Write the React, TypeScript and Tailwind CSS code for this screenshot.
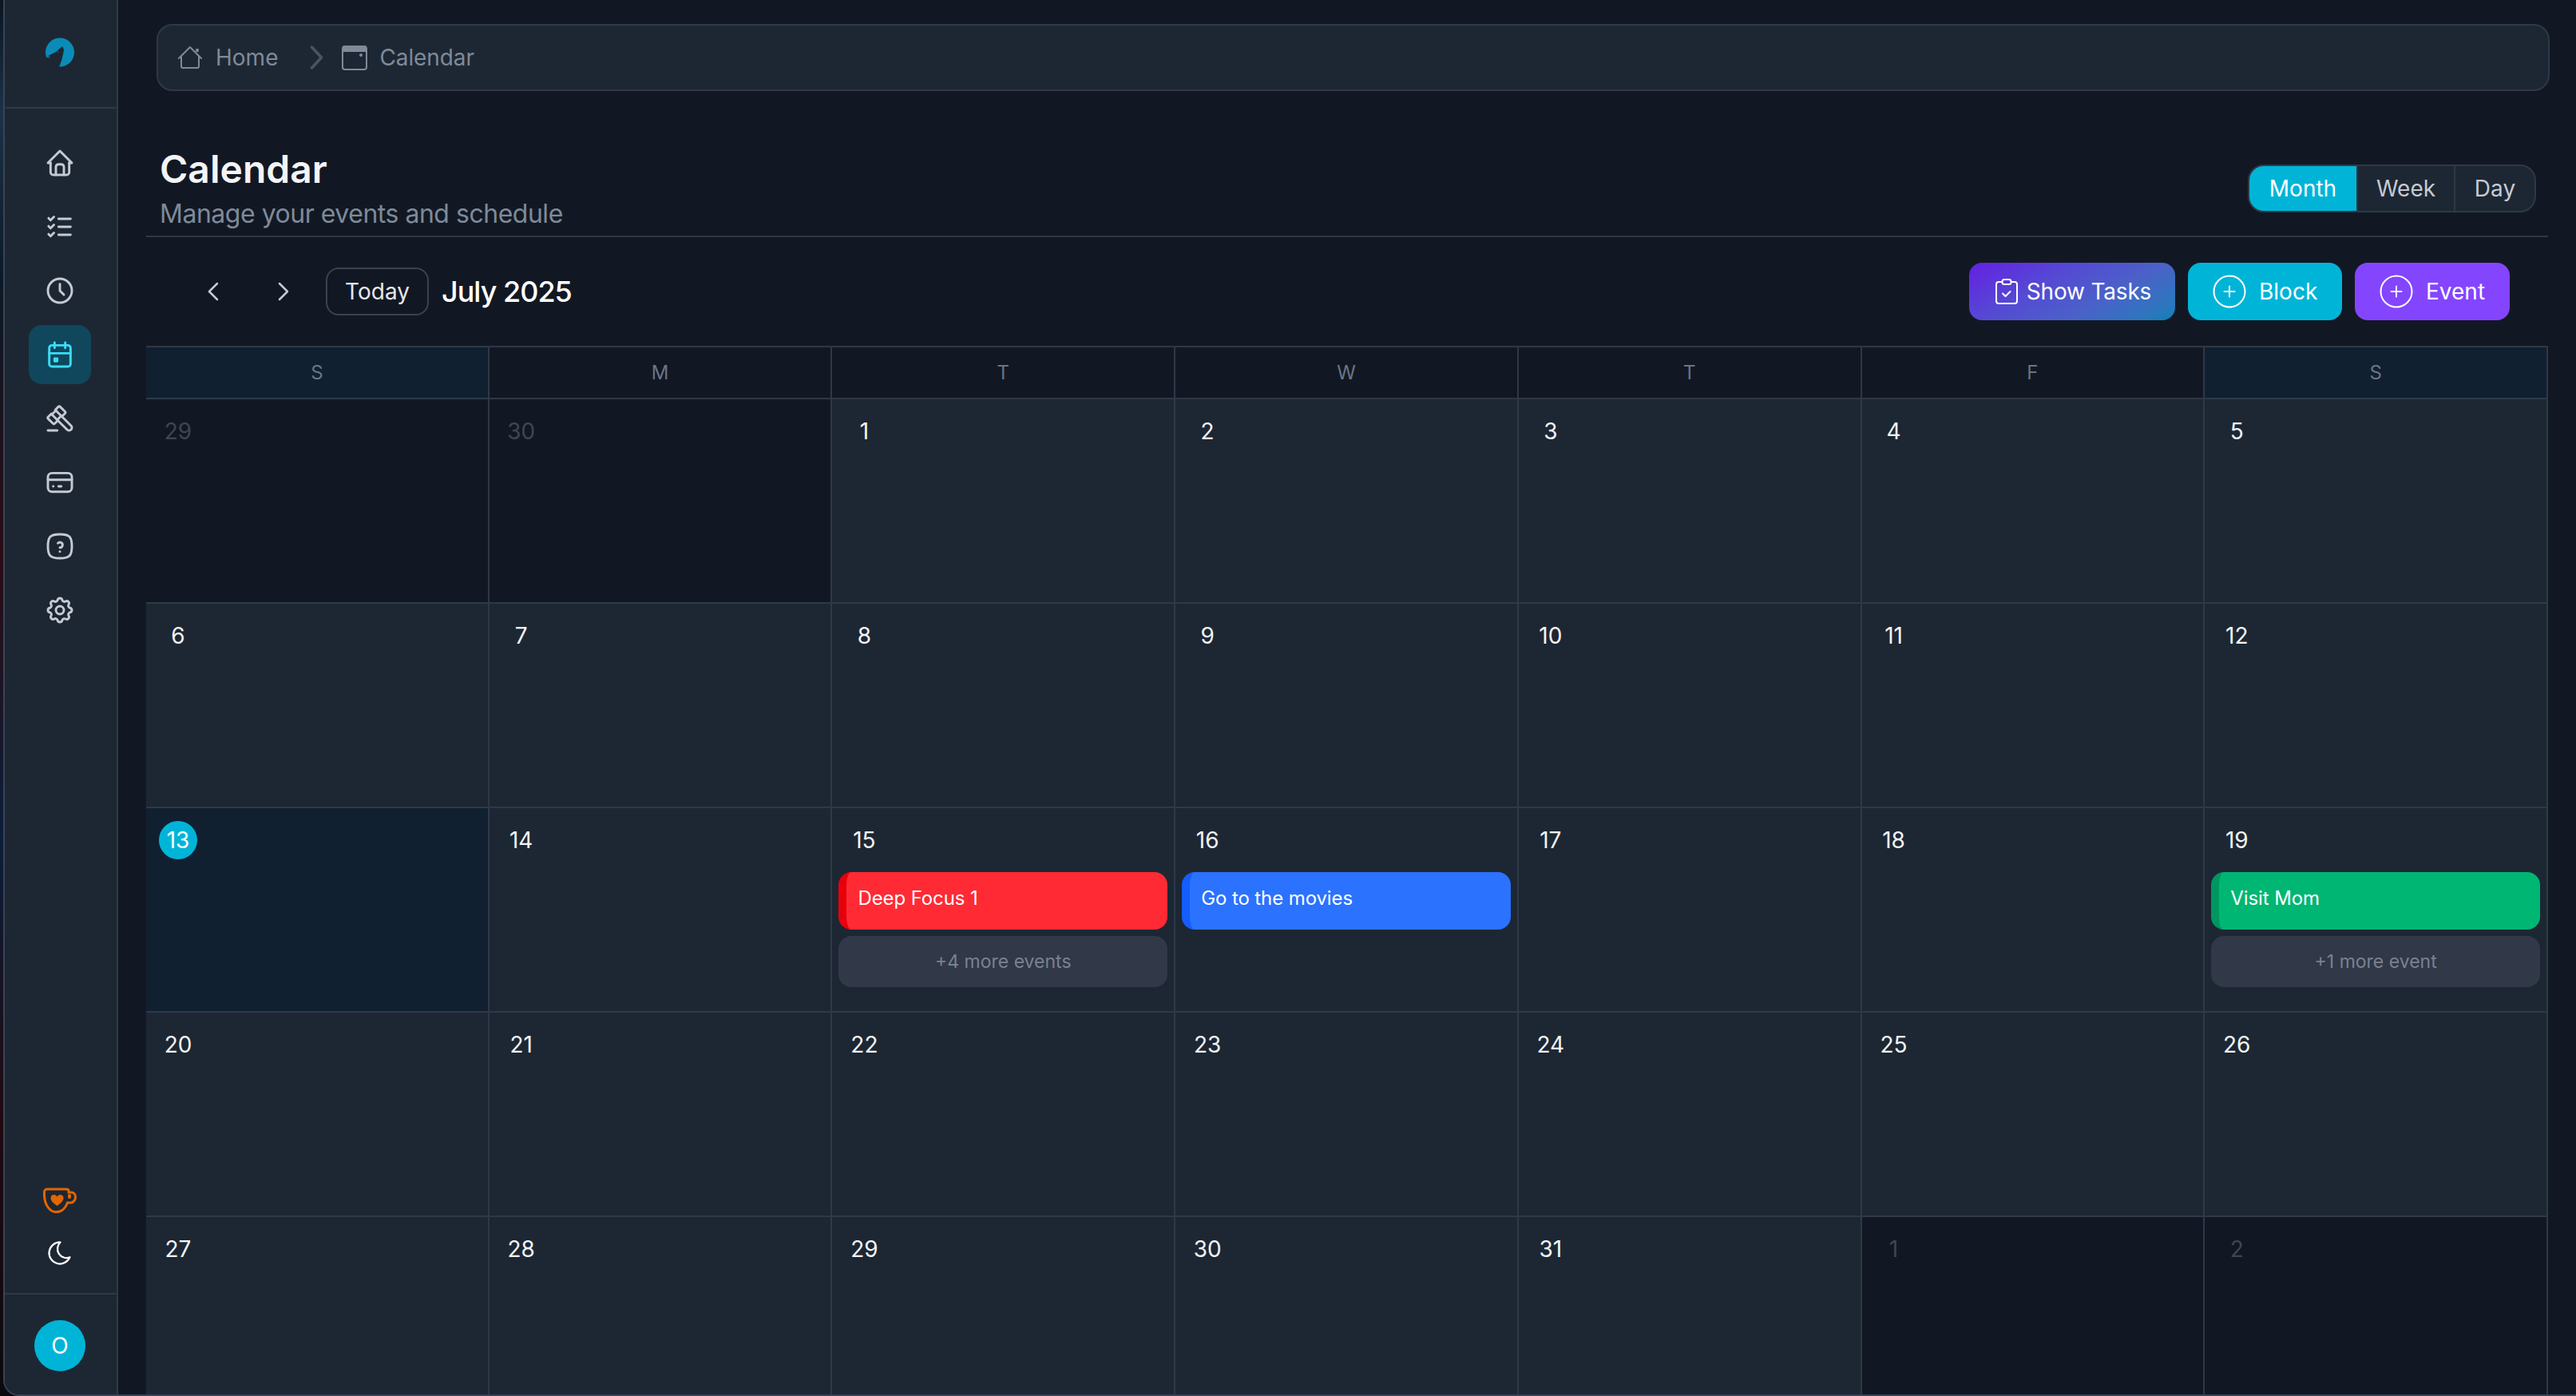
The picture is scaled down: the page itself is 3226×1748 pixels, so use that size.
import {
  TbCalendarEvent,
  TbCirclePlus,
  TbChevronLeft,
  TbChevronRight,
  TbClock,
  TbCreditCard,
  TbGavel,
  TbHelpSquareRounded,
  TbHome,
  TbListCheck,
  TbMoon,
  TbSettings,
} from 'react-icons/tb';

type Day = {
  n: number;
  muted?: boolean;
  today?: boolean;
  event?: { label: string; bg: string; more?: string };
};

const days: Day[] = [
  { n: 29, muted: true },
  { n: 30, muted: true },
  ...[1, 2, 3, 4, 5, 6, 7, 8, 9, 10, 11, 12].map((n) => ({ n })),
  { n: 13, today: true },
  { n: 14 },
  {
    n: 15,
    event: {
      label: 'Deep Focus 1',
      bg: 'border-[#e7000b] bg-[#ff2a34]',
      more: '+4 more events',
    },
  },
  { n: 16, event: { label: 'Go to the movies', bg: 'border-[#155dfc] bg-[#2b72ff]' } },
  { n: 17 },
  { n: 18 },
  {
    n: 19,
    event: {
      label: 'Visit Mom',
      bg: 'border-[#00965f] bg-[#00b673]',
      more: '+1 more event',
    },
  },
  ...[20, 21, 22, 23, 24, 25, 26, 27, 28, 29, 30, 31].map((n) => ({ n })),
  { n: 1, muted: true },
  { n: 2, muted: true },
];

const weekdays = ['S', 'M', 'T', 'W', 'T', 'F', 'S'];

const nav = [
  { icon: TbHome },
  { icon: TbListCheck },
  { icon: TbClock },
  { icon: TbCalendarEvent, active: true },
  { icon: TbGavel },
  { icon: TbCreditCard },
  { icon: TbHelpSquareRounded },
  { icon: TbSettings },
];

function WolfLogo() {
  return (
    <svg width="38" height="37" viewBox="0 0 38 37">
      <circle cx="19" cy="18.500" r="18" fill="#0b8bb8" />
      <path d="M0 26 L6 22 L14 18 L22 11 L24 15 L23 21 L21 29 L18 37 L0 37 Z" fill="#1d2733" />
      <path d="M1 24 L7 23.500 L5 25.500 Z" fill="#0b8bb8" />
      <circle cx="16.500" cy="18" r="0.800" fill="#0b8bb8" />
    </svg>
  );
}

function KofiIcon() {
  return (
    <svg width="42" height="32" viewBox="0 0 42 32" fill="none">
      <path
        d="M5 2h24c2 0 3 1 3 2.500V6h3c3.500 0 5.500 2.500 5.500 6s-2.500 7-6 7h-4c-2 6-7 11.500-13 11.500h-2C9 30.500 1.500 22 1.500 9V5.500C1.500 3.500 3 2 5 2Z"
        stroke="#e26600"
        strokeWidth="3"
      />
      <path
        d="M17.500 23c-4-3-8-6-8-10 0-4.500 6-5.500 8-1.500 2-4 8-3 8 1.500 0 4-4 7-8 10Z"
        fill="#e26600"
      />
      <rect x="31" y="8" width="4" height="6" rx="2" fill="#e26600" />
    </svg>
  );
}

function CrumbHome() {
  return (
    <svg width="32" height="32" viewBox="0 0 32 32" fill="none" stroke="#7e8a9a" strokeWidth="2">
      <path d="M2 17 16 3l14 14" strokeLinecap="round" strokeLinejoin="round" />
      <path d="M5 14v13a2 2 0 0 0 2 2h18a2 2 0 0 0 2-2V14" />
      <path d="M25 9V5" strokeWidth="3.500" />
    </svg>
  );
}

function CrumbChevron() {
  return (
    <svg width="18" height="30" viewBox="0 0 18 30" fill="none" stroke="#4a5363" strokeWidth="3.500">
      <path d="m2.500 2 12 13-12 13" strokeLinecap="round" strokeLinejoin="round" />
    </svg>
  );
}

function CrumbCalendar() {
  return (
    <svg width="32" height="32" viewBox="0 0 32 32" fill="none">
      <rect x="1" y="2" width="30" height="29" rx="3" stroke="#7e8a9a" strokeWidth="2" />
      <path d="M1 9V4a3 3 0 0 1 3-3h24a3 3 0 0 1 3 3v5Z" fill="#7e8a9a" />
      <circle cx="24" cy="13" r="2" fill="#7e8a9a" />
    </svg>
  );
}

function ClipboardIcon() {
  return (
    <svg width="28" height="32" viewBox="0 0 28 32" fill="none" stroke="white" strokeWidth="2">
      <path d="M8 4H4a3 3 0 0 0-3 3v21a3 3 0 0 0 3 3h20a3 3 0 0 0 3-3V7a3 3 0 0 0-3-3h-4" />
      <rect x="8.500" y="1" width="11" height="6" rx="2.500" />
      <path d="m9 18.500 3.500 3.500 6-6" strokeLinecap="round" strokeLinejoin="round" />
    </svg>
  );
}

function Sidebar() {
  return (
    <aside className="flex w-[142px] shrink-0 flex-col border-r-2 border-[#2f3848] bg-[#1d2733] text-[#c5cad3]">
      <div className="flex h-[136px] shrink-0 items-center justify-center border-b-2 border-[#2f3848] pb-[4px] pr-[2px]">
        <WolfLogo />
      </div>
      <nav className="flex flex-col items-center gap-[6px] pr-[2px] pt-[31px]">
        {nav.map(({ icon: Icon, active }, i) => (
          <div
            key={i}
            className={`flex h-[74px] w-[78px] items-center justify-center rounded-[16px] ${
              active ? 'bg-[#10475c] text-[#3bdcf7]' : ''
            }`}
          >
            <Icon size={40} strokeWidth={1.75} />
          </div>
        ))}
      </nav>
      <div className="mt-auto flex flex-col items-center gap-[32px] pb-[32px] pr-[2px]">
        <KofiIcon />
        <TbMoon size={36} strokeWidth={1.5} className="text-white" />
      </div>
      <div className="flex h-[127px] shrink-0 items-start justify-center border-t-2 border-[#2f3848] pr-[2px] pt-[32px]">
        <div className="flex h-[64px] w-[64px] items-center justify-center rounded-full bg-[#00b4d8] text-[28px] text-white">
          O
        </div>
      </div>
    </aside>
  );
}

function Breadcrumb() {
  return (
    <div className="mt-[30px] ml-[13px] mr-[-2px] flex h-[84px] shrink-0 items-center rounded-[20px] border-2 border-[#2f3848] bg-[#1d2733] pl-[24px] text-[28px] text-[#7e8a9a]">
      <CrumbHome />
      <span className="ml-[16px]">Home</span>
      <span className="ml-[40px] mr-[22px]">
        <CrumbChevron />
      </span>
      <CrumbCalendar />
      <span className="ml-[15px] tracking-[-0.1px]">Calendar</span>
    </div>
  );
}

function ViewToggle() {
  return (
    <div className="mt-[24px] mr-[15px] flex h-[60px] overflow-hidden rounded-[20px] border-2 border-[#2f3848] bg-[#1d2733] text-[28px] text-[#c5cad3]">
      <div className="flex w-[134px] items-center justify-center bg-[#00b4d8] text-white">Month</div>
      <div className="flex w-[124px] items-center justify-center border-x-2 border-[#2f3848]">Week</div>
      <div className="flex w-[99px] items-center justify-center">Day</div>
    </div>
  );
}

function Toolbar() {
  return (
    <div className="flex h-[136px] shrink-0 items-center pl-[40px] pr-[48px] text-white">
      <button className="flex h-[60px] w-[88px] items-center justify-center text-[#c5cad3]">
        <TbChevronLeft size={40} strokeWidth={1.5} />
      </button>
      <button className="flex h-[60px] w-[88px] items-center justify-center text-[#c5cad3]">
        <TbChevronRight size={40} strokeWidth={1.5} />
      </button>
      <button className="ml-[9px] flex h-[60px] w-[129px] items-center justify-center rounded-[16px] border-2 border-[#3a4352] text-[28px] text-[#e5e7eb]">
        Today
      </button>
      <span className="ml-[16px] text-[36px] font-medium tracking-[-1px]">July 2025</span>
      <div className="ml-auto flex gap-[16px] text-[28px]">
        <button className="flex h-[72px] w-[258px] items-center justify-center gap-[11px] rounded-[16px] bg-[linear-gradient(150deg,#6420e2_0%,#5549d4_35%,#4a62c8_65%,#2a78bd_90%,#0a82b5_100%)] pl-[3px] tracking-[-0.2px]">
          <ClipboardIcon />
          Show Tasks
        </button>
        <button className="flex h-[72px] w-[193px] items-center gap-[11px] rounded-[16px] bg-[#00b4d8] pl-[26px]">
          <TbCirclePlus size={52} strokeWidth={0.92} />
          Block
        </button>
        <button className="flex h-[72px] w-[194px] items-center gap-[11px] rounded-[16px] bg-[#8445ff] pl-[26px]">
          <TbCirclePlus size={52} strokeWidth={0.92} />
          Event
        </button>
      </div>
    </div>
  );
}

function DayCell({ day }: { day: Day }) {
  const bg = day.today ? 'bg-[#102030]' : day.muted ? 'bg-[#121823]' : 'bg-[#1d2733]';
  return (
    <div className={`h-[256px] border-r-2 border-b-2 border-[#2f3848] px-[8px] pt-[16px] ${bg}`}>
      <div
        className={`ml-[8px] flex h-[48px] w-[48px] items-center justify-center rounded-full text-[28px] ${
          day.today
            ? 'bg-[#00b4d8] text-white'
            : day.muted
              ? 'text-[#3d4656]'
              : 'text-[#f3f4f6]'
        }`}
      >
        {day.n}
      </div>
      {day.event && (
        <div className="mt-[16px] flex flex-col gap-[8px]">
          <div
            className={`h-[72px] rounded-[16px] border-l-[10px] pl-[14px] pt-[17px] text-[24px] leading-[32px] tracking-[-0.1px] text-white ${day.event.bg}`}
          >
            {day.event.label}
          </div>
          {day.event.more && (
            <div className="flex h-[64px] items-center justify-center rounded-[16px] bg-[#313848] text-[23px] text-[#7a8290]">
              {day.event.more}
            </div>
          )}
        </div>
      )}
    </div>
  );
}

export default function App() {
  return (
    <div className="flex h-screen w-screen overflow-hidden bg-[linear-gradient(180deg,#0a1622_0%,#1b3247_8%,#0b1a28_20%,#2a0c14_40%,#0b1e3a_60%,#200a10_80%,#0a0a0e_100%)] font-[Inter,sans-serif] antialiased">
      <div className="w-[4px] shrink-0" />
      <div className="flex min-w-0 flex-1 overflow-hidden rounded-bl-[20px] border-b-2 border-l-2 border-[#3a4352] bg-[#121823]">
        <Sidebar />
        <main className="flex min-w-0 flex-1 flex-col overflow-hidden pl-[35px] pr-[35px]">
          <Breadcrumb />
          <header className="mt-[68px] flex shrink-0 items-start justify-between border-b-2 border-[#2f3848] pb-[3px] pl-[17px]">
            <div>
              <h1 className="text-[48px] leading-[60px] font-semibold text-[#f3f4f6]">Calendar</h1>
              <p className="mt-[2px] text-[32px] leading-[48px] tracking-[-0.48px] text-[#7e8a9a]">
                Manage your events and schedule
              </p>
            </div>
            <ViewToggle />
          </header>
          <Toolbar />
          <div className="grid shrink-0 grid-cols-7 border-t-2 border-[#2f3848]">
            {weekdays.map((d, i) => (
              <div
                key={i}
                className={`flex h-[65px] items-center justify-center border-r-2 border-b-2 border-[#2f3848] text-[24px] text-[#6b7585] ${
                  i === 0 || i === 6 ? 'bg-[#102030]' : ''
                }`}
              >
                {d}
              </div>
            ))}
            {days.map((day, i) => (
              <DayCell key={i} day={day} />
            ))}
          </div>
        </main>
      </div>
    </div>
  );
}
